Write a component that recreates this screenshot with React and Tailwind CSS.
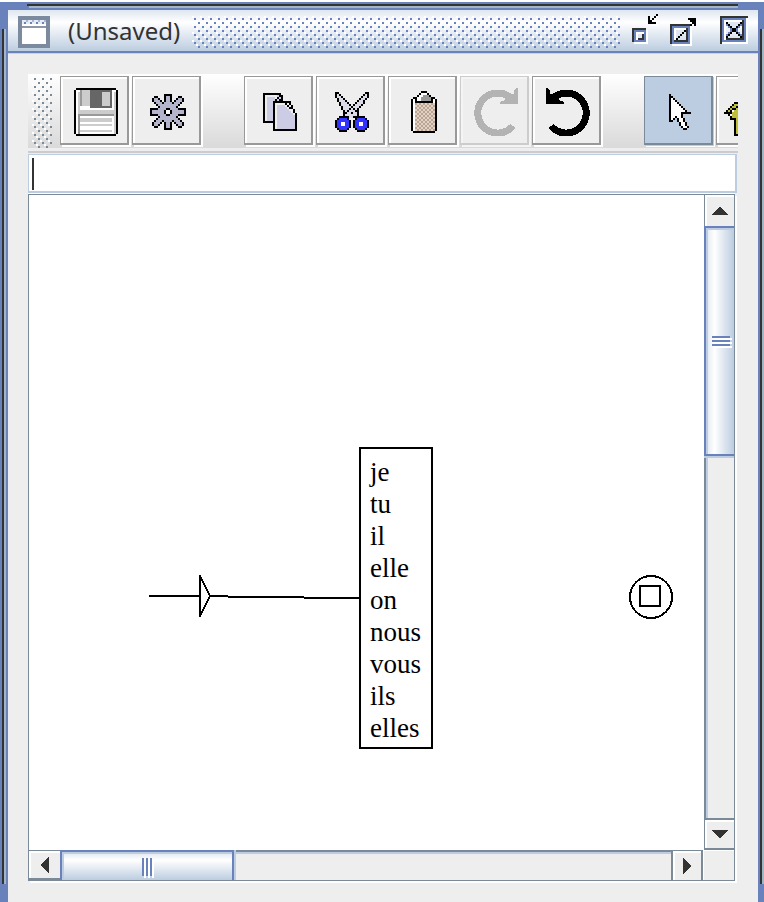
import React from "react";

const INK = {
  K: "#000000",
  D: "#333333",
  W: "#ffffff",
  B: "#6a82bb",
  L: "#dfe6f0",
  S: "#b4b4cc",
  F: "#dcdce8",
  R: "#3333ff",
  G: "#999999",
  Y: "#bebe3c",
  T: "#e2d0c0",
  U: "#b8a596",
};

/* Bitmap glyph: one character per cell, each cell two pixels wide. */
function Pixels({ rows, x = 0, y = 0 }) {
  return rows.flatMap((row, r) =>
    [...row].map((c, i) =>
      INK[c] ? (
        <rect key={`${r}-${i}`} x={x + i} y={y + r} width="1" height="1" fill={INK[c]} />
      ) : null
    )
  );
}

function Glyph({ w, h, className = "", children }) {
  return (
    <svg
      width={w * 2}
      height={h * 2}
      viewBox={`0 0 ${w} ${h}`}
      shapeRendering="crispEdges"
      className={`block shrink-0 ${className}`}
      aria-hidden="true"
    >
      {children}
    </svg>
  );
}

const half = [
  ".......KKKK.......",
  "..KK...KSSK...KK..",
  ".KSSK..KSSK..KSSK.",
  ".KSSSK.KSSK.KSSSK.",
  "..KSSSKSSSSKSSSK..",
  "...KSSSSSSSSSSK...",
  "....KSSSSSSSSK....",
  "KKKKSSSSKKSSSSKKKK",
  "KSSSSSSKWWKSSSSSSK",
];
const gear = [...half, ...[...half].reverse()];

const blades = [
  "KK.............KK",
  "KFK...........KFK",
  "KFFK.........KFFK",
  ".KFFK.......KFFK.",
  ".KFFFK.....KFFK..",
  "..KFFFK...KFFFK..",
  "..KFFFFK.KFFFK...",
  "...KFFFFKFFFK....",
  "...KFFFKFKFK.....",
  "....KFKFFFKK.....",
  "....KKFFKFFK.....",
  "....KFFFFFFK.....",
  "....KKKFFKKK.....",
];
const ring = [
  "..KKKK..",
  ".KRRRRK.",
  "KRRRRRRK",
  "KRRWWRRK",
  "KRRWWRRK",
  "KRRRRRRK",
  ".KRRRRK.",
  "..KKKK..",
];

const clipboard = [
  ".....KKK.....",
  "....KWWWK....",
  "...KWWGGGK...",
  ".KKWWGGGGGKK.",
  "KWKWWGGGGGKWK",
  "KWKKKKKKKKKWK",
  ...Array.from({ length: 14 }, (_, i) => (i % 2 ? "KWTUTUTUTUTUK" : "KWUTUTUTUTUTK")),
  ".KKKKKKKKKKK.",
];

const cursor = [
  "K..........",
  "KK.........",
  "KWK........",
  "KWWK.......",
  "KWWWK......",
  "KWWWWK.....",
  "KWWWWWK....",
  "KWWWWWWK...",
  "KWWWWWWWK..",
  "KWWWWWKKKKK",
  "KWWWWWK....",
  "KWWKWWK....",
  "KWK.KWWK...",
  "KK..KWWK...",
  ".....KWWK..",
  ".....KWWK..",
  "......KWWK.",
  ".......KK..",
];

const houseArrow = [
  ".....KKKK.....",
  "....KYYYYK....",
  "...KYYKKYYK...",
  "..KYKKYYYYYK..",
  ".KYKWYYYYYYYK.",
  "KKKKYYYYYYKKKK",
  "..KWYYYYYYYK..",
  "...KYYYYYYK...",
  "...KKKYYKKK...",
  ...Array(7).fill(".....KYYK....."),
  ".....KKKK.....",
];

function Floppy() {
  return (
    <Glyph w={22} h={24}>
      <path d="M1 0h20v1H1zM0 1h1v22H0zM21 1h1v22h-1zM1 23h20v1H1z" fill="#000" />
      <path d="M1 1h20v22H1z" fill="#fff" />
      <path d="M2 2h1v11H2zM20 2h1v21h-1zM2 11h19v2H2zM4 1h4v8H4z" fill="#ccc" />
      <path d="M3 1h1v8H3zM2 13h18v1H2zM2 14h1v9H2z" fill="#999" />
      <path d="M8 1h11v9H8z" fill="#666" />
      <path d="M14 2h4v7h-4zM3 15h16v2H3zM3 18h16v1H3zM3 21h16v1H3z" fill="#ccc" />
    </Glyph>
  );
}

function Copy() {
  return (
    <Glyph w={17} h={19}>
      <path d="M0 0h9v1h1v3h4v11H0z" fill="#000" />
      <path d="M1 1h6v2H6v1H5v10H1z" fill="#eee" />
      <path d="M2 2h4v2H5v10H2z" fill="#cccce5" />
      <path d="M7 1h1v1H7zM8 2h1v1H8zM7 3h1v1H7z" fill="#cccce5" />
      <path d="M5 4h9v2h1v2h1v2h1v9H5z" fill="#000" />
      <path d="M6 5h5v1h1v1h1v1h1v1h1v1h1v8H6z" fill="#eee" />
      <path d="M7 6h4v1h1v1h1v1h1v1h1v1h1v7H7z" fill="#cccce5" />
      <path d="M12 5h1v1h-1zM13 6h1v1h-1zM12 7h1v1h-1zM14 8h1v1h-1z" fill="#eee" />
    </Glyph>
  );
}

function Turn({ className, flip }) {
  return (
    <svg width="44" height="48" viewBox="0 0 44 48" shapeRendering="crispEdges" aria-hidden="true" className={className}>
      <g transform={flip ? "matrix(-1 0 0 1 44 0)" : undefined}>
        <path d="M39 38A20 20 0 1 1 38 11" fill="none" stroke="currentColor" strokeWidth="7" />
        <path d="M44 0v16H26v-2l5-2-1-4-2-5 8 3h4V3l2-3z" fill="currentColor" />
      </g>
    </svg>
  );
}

function Bumps({ id, color, className }) {
  return (
    <svg className={`block ${className}`} aria-hidden="true" shapeRendering="crispEdges">
      <defs>
        <pattern id={id} width="8" height="8" patternUnits="userSpaceOnUse">
          <path d="M0 0h2v2H0zM4 4h2v2H4z" fill="#fff" />
          <path d="M2 2h2v2H2zM6 6h2v2H6z" fill={color} />
        </pattern>
      </defs>
      <rect width="100%" height="100%" fill={`url(#${id})`} />
    </svg>
  );
}

const toolStyles = {
  normal: "border-[#999] bg-[#eee] shadow-[2px_2px_0_#fff,inset_2px_2px_0_#fff]",
  disabled: "border-[#ccc] bg-[#eee] shadow-[2px_2px_0_#f4f4f4,inset_2px_2px_0_#f4f4f4]",
  selected: "border-[#7a8a99] bg-[#bccde2] shadow-[1px_1px_0_#bccde2,2px_2px_0_#fff]",
};

function Tool({ label, kind = "normal", children }) {
  return (
    <button
      type="button"
      aria-label={label}
      disabled={kind === "disabled"}
      aria-pressed={kind === "selected" ? true : undefined}
      className={`flex h-[69px] w-[69px] shrink-0 items-center justify-center border-t border-r-2 border-b-2 border-l pt-1 pl-1 ${toolStyles[kind]}`}
    >
      {children}
    </button>
  );
}

function SideRail({ inner }) {
  return (
    <div className="flex shrink-0 flex-col bg-[#6a82bb]">
      <div className="h-[27px]" />
      <div className="flex flex-1">
        <div className="w-0.5" />
        <div className="w-0.5 bg-[#333]" />
        <div className="w-0.5 bg-[#a3b4c4]" />
        {inner && <div className="w-0.5" />}
      </div>
      <div className="h-[18px]" />
    </div>
  );
}

function TitleBar() {
  return (
    <header className="flex h-11 items-start border-b border-[#c5d3e4] bg-[#eee]">
      <div className="flex h-[43px] w-full items-start border-b-2 border-[#6a82bb] bg-linear-to-b from-[#dfe6f0] via-white via-30% to-[#bccde0] pt-1.5 pr-2.5 pl-2.5">
        <Glyph w={16} h={16}>
          <path d="M0 0h16v16H0z" fill="#7c8a9f" />
          <path d="M2 2h12v12H2z" fill="#fff" />
          <path d="M2 2h12v2H2z" fill="#e6ebf4" />
          <path d="M2 5h12v1H2z" fill="#8c98a9" />
          <path d="M3 3h1v1H3zM6 3h1v1H6zM9 3h1v1H9zM12 3h1v1h-1z" fill="#6a82bb" />
          <path d="M4 2h1v1H4zM7 2h1v1H7zM10 2h1v1h-1zM13 2h1v1h-1z" fill="#a9b7d8" />
        </Glyph>
        <h1 className="ml-[18px] w-[124px] shrink-0 whitespace-nowrap font-['Noto_Sans','Open_Sans',sans-serif] text-2xl leading-[30px] text-[#333]">
          (Unsaved)
        </h1>
        <Bumps id="title-bumps" color="#6a82bb" className="h-8 min-w-0 flex-1" />
        <div className="ml-3 flex shrink-0">
          <button type="button" aria-label="Minimize">
            <Glyph w={13} h={16} className="overflow-visible">
              <Pixels
                y={6}
                rows={["DDDDDDD.", "DBBBBBBW", "DBWWWWBW", "DBWLLDBW", "DBWLLDBW", "DBWDDDBW", "DBBBBBBW", ".WWWWWWW"]}
              />
              <Pixels x={8} y={-1} rows={["....K", "K..KW", "K.KW.", "KKW..", "KKKK.", ".WWWW"]} />
            </Glyph>
          </button>
          <button type="button" aria-label="Maximize" className="ml-3">
            <Glyph w={13} h={16}>
              <Pixels
                y={4}
                rows={[
                  "DDDDDDDDDD.",
                  "DBBBBBBBBBW",
                  "DBWWWWWWDBW",
                  "DBWLLLLKDBW",
                  "DBWLLLK.DBW",
                  "DBWLLK..DBW",
                  "DBWLK...DBW",
                  "DBWK....DBW",
                  "DBDDDDDDDBW",
                  "DBBBBBBBBBW",
                  ".WWWWWWWWWW",
                ]}
              />
              <Pixels x={9} y={1} rows={["KKKK", ".KKK", "..KK", ".K.K"]} />
            </Glyph>
          </button>
          <button type="button" aria-label="Close" className="ml-6">
            <Glyph w={14} h={16}>
              <Pixels
                rows={[
                  "DDDDDDDDDDDDDD",
                  "DBBBBBBBBBBBBW",
                  "DBWWWWWWWWWDBW",
                  "DBWKLLLLLLKDBW",
                  "DBWBKLLLLKBDBW",
                  "DBW.BKLLKB.DBW",
                  "DBW..BKKB..DBW",
                  "DBW..BKKB..DBW",
                  "DBW.BK..KB.DBW",
                  "DBWBK....KBDBW",
                  "DBWK......KDBW",
                  "DBWDDDDDDDDDBW",
                  "DBBBBBBBBBBBBW",
                  "DWWWWWWWWWWWWW",
                ]}
              />
            </Glyph>
          </button>
        </div>
      </div>
    </header>
  );
}

function Toolbar() {
  return (
    <div className="border-b border-[#eee]">
      <div className="border-b-2 border-[#ccc] pb-[3px]">
        <div role="toolbar" aria-label="Editing" className="flex h-[74px] items-start gap-[3px] overflow-hidden bg-linear-to-b from-white to-[#dadada] pt-0.5 pl-1">
          <Bumps id="grip-bumps" color="#7a8a99" className="mr-[5px] h-[72px] w-5 shrink-0" />
          <Tool label="Save"><Floppy /></Tool>
          <Tool label="Settings">
            <Glyph w={18} h={18}><Pixels rows={gear} /></Glyph>
          </Tool>
          <div className="w-[37px] shrink-0" />
          <Tool label="Copy"><Copy /></Tool>
          <Tool label="Cut">
            <Glyph w={17} h={20}>
              <Pixels rows={blades} />
              <Pixels rows={ring} y={12} />
              <Pixels rows={ring} x={9} y={12} />
            </Glyph>
          </Tool>
          <Tool label="Paste">
            <Glyph w={13} h={21}><Pixels rows={clipboard} /></Glyph>
          </Tool>
          <Tool label="Redo" kind="disabled"><Turn className="text-[#b3b3b3]" /></Tool>
          <Tool label="Undo"><Turn flip className="text-black" /></Tool>
          <div className="w-[37px] shrink-0" />
          <Tool label="Select" kind="selected">
            <Glyph w={11} h={18}><Pixels rows={cursor} /></Glyph>
          </Tool>
          <Tool label="Insert">
            <Glyph w={28} h={24}><Pixels rows={houseArrow} y={7} /></Glyph>
          </Tool>
        </div>
      </div>
    </div>
  );
}

const words = ["je", "tu", "il", "elle", "on", "nous", "vous", "ils", "elles"];

function Canvas() {
  return (
    <main className="relative min-w-0 flex-1 overflow-hidden bg-white">
      <svg className="absolute inset-0 h-full w-full" shapeRendering="crispEdges" fill="none" stroke="#000" strokeWidth="2" role="img" aria-label="Graph">
        <path d="M120 401h51M182 401h17M199 402h76M275 403h56" />
        <path d="M171 380v42" />
        <path d="M171 381l10 20l-10 20" />
        <circle cx="622" cy="402" r="21" />
        <rect x="611" y="391" width="20" height="20" />
      </svg>
      <ul className="absolute top-[252px] left-[330px] w-[74px] border-2 border-black bg-white px-[9px] pt-[7px] pb-[3px] font-['Liberation_Serif',serif] text-[27px] leading-8 text-black">
        {words.map((w) => (
          <li key={w}>{w}</li>
        ))}
      </ul>
    </main>
  );
}

function VerticalBar() {
  return (
    <div role="scrollbar" aria-orientation="vertical" aria-controls="graph" aria-valuenow={0} className="flex w-[30px] shrink-0 flex-col bg-[#eee]">
      <button type="button" aria-label="Scroll up" className="flex h-[31px] shrink-0 items-center justify-center border-l border-[#7a8a99] shadow-[inset_2px_2px_0_#fff]">
        <svg width="18" height="8" shapeRendering="crispEdges"><path d="M9 0l9 8H0z" fill="#333" /></svg>
      </button>
      <div className="flex-1 border-l-2 border-[#7a8a99] shadow-[inset_2px_0_0_#bccde2]">
        <div className="-ml-0.5 flex h-[230px] items-center justify-center border-y-2 border-l-2 border-[#6a82bb] bg-linear-to-r from-[#dfe6f0] via-white via-30% to-[#bccde0] shadow-[inset_2px_2px_0_#bccde2,0_2px_0_#bccde2]">
          <div className="flex flex-col gap-0.5 pl-0.5">
            <i className="h-0.5 w-[18px] bg-[#6a82bb] shadow-[2px_2px_0_#fff]" />
            <i className="h-0.5 w-[18px] bg-[#6a82bb] shadow-[2px_2px_0_#fff]" />
            <i className="h-0.5 w-[18px] bg-[#6a82bb] shadow-[2px_2px_0_#fff]" />
          </div>
        </div>
      </div>
      <button type="button" aria-label="Scroll down" className="flex h-8 shrink-0 items-center justify-center border-y-2 border-l border-[#7a8a99] shadow-[inset_2px_2px_0_#fff]">
        <svg width="18" height="8" shapeRendering="crispEdges"><path d="M0 0h18l-9 8z" fill="#333" /></svg>
      </button>
    </div>
  );
}

function HorizontalBar() {
  return (
    <div role="scrollbar" aria-orientation="horizontal" aria-controls="graph" aria-valuenow={0} className="flex min-w-0 flex-1 bg-[#eee]">
      <button type="button" aria-label="Scroll left" className="flex w-[31px] shrink-0 items-center justify-center border-t border-b-2 border-[#7a8a99] shadow-[inset_2px_2px_0_#fff]">
        <svg width="8" height="18" shapeRendering="crispEdges"><path d="M8 0v18L0 9z" fill="#333" /></svg>
      </button>
      <div className="flex-1 border-t-2 border-[#7a8a99] shadow-[inset_0_2px_0_#bccde2]">
        <div className="-mt-0.5 flex h-[30px] w-[174px] items-center justify-center border-x-2 border-t-2 border-[#6a82bb] bg-linear-to-b from-[#dfe6f0] via-white via-30% to-[#bccde0] shadow-[inset_2px_2px_0_#bccde2,2px_0_0_#bccde2]">
          <div className="flex gap-0.5 pt-0.5">
            <i className="h-[18px] w-0.5 bg-[#6a82bb] shadow-[2px_2px_0_#fff]" />
            <i className="h-[18px] w-0.5 bg-[#6a82bb] shadow-[2px_2px_0_#fff]" />
            <i className="h-[18px] w-0.5 bg-[#6a82bb] shadow-[2px_2px_0_#fff]" />
          </div>
        </div>
      </div>
      <button type="button" aria-label="Scroll right" className="flex w-8 shrink-0 items-center justify-center border-x-2 border-t border-[#7a8a99] shadow-[inset_2px_2px_0_#fff]">
        <svg width="8" height="18" shapeRendering="crispEdges"><path d="M0 0v18l8-9z" fill="#333" /></svg>
      </button>
    </div>
  );
}

export default function App() {
  return (
    <div className="flex min-h-screen flex-col bg-white pt-0.5">
      <div className="flex flex-1 bg-[#6a82bb]">
        <SideRail inner />
        <div className="flex min-w-0 flex-1 flex-col">
          <div className="pt-0.5 pr-5 pb-0.5 pl-[19px]">
            <div className="h-0.5 bg-[#333]" />
            <div className="ml-0.5 h-0.5 bg-[#a3b4c4]" />
          </div>
          <TitleBar />
          <div className="flex flex-1 flex-col bg-[#eee] px-5 pt-5 pb-[21px]">
            <Toolbar />
            <div className="relative mr-px">
              <input
                type="text"
                aria-label="Box content"
                className="block h-[39px] w-full border-t border-r-2 border-b-2 border-l border-[#bccde2] bg-white px-1 font-['Liberation_Serif',serif] text-2xl caret-transparent outline-none"
              />
              <span className="absolute top-1 left-1 h-8 w-0.5 bg-[#333]" />
            </div>
            <div className="mt-px mr-[3px] flex flex-1 flex-col border border-[#7a8a99] shadow-[2px_2px_0_#fff,0_-1px_0_#fff]">
              <div id="graph" className="flex min-h-[655px] flex-1">
                <Canvas />
                <VerticalBar />
              </div>
              <div className="flex h-[30px] shrink-0">
                <HorizontalBar />
                <div className="w-[31px] shrink-0 bg-[#eee] shadow-[inset_1px_1px_0_#fff]" />
              </div>
            </div>
          </div>
        </div>
        <SideRail />
      </div>
    </div>
  );
}
